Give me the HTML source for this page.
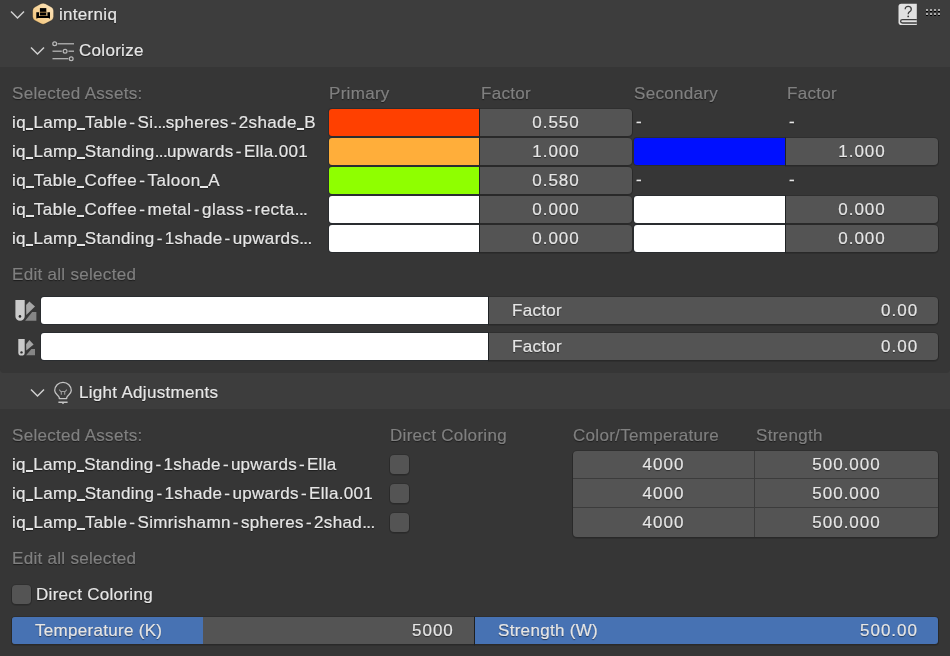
<!DOCTYPE html><html><head><meta charset="utf-8"><style>
html,body{margin:0;padding:0;}
body{width:950px;height:656px;overflow:hidden;background:#3d3d3d;position:relative;font-family:"Liberation Sans",sans-serif;font-size:17px;color:#e6e6e6;}
.a{position:absolute;}
.t{position:absolute;line-height:20px;white-space:pre;will-change:transform;letter-spacing:0.3px;-webkit-text-stroke:0.2px currentColor;text-shadow:0 1px 1px rgba(0,0,0,0.5);}
.c{text-align:center;}
.n{letter-spacing:1px;}
.dim{color:#808080;}
.h{padding:0 2.1px;}
.el{letter-spacing:-0.6px;}
.u{display:inline-block;width:7.5px;height:1.5px;margin:0 0.2px 0 -0.2px;background:currentColor;position:relative;top:1.5px;box-shadow:0 1px 1px rgba(0,0,0,0.4);}
.pb{position:absolute;left:0;width:950px;background:#363636;}
.num{position:absolute;background:#545454;box-shadow:0 0 0 1px rgba(0,0,0,0.12),0 1px 0 1px rgba(0,0,0,0.12);}
.sw{position:absolute;box-shadow:0 0 0 1px rgba(30,36,42,0.5);}
.cb{position:absolute;width:19px;height:19px;background:#545454;border-radius:4px;box-shadow:0 0 0 1px rgba(0,0,0,0.1),0 1px 0 1px rgba(0,0,0,0.12);}
</style></head><body>
<div class="pb" style="top:67px;height:306px;border-radius:0 0 4px 4px;"></div>
<div class="pb" style="top:409px;height:247px;"></div>
<svg class="a" style="left:10px;top:10px" width="16" height="10" viewBox="0 0 16 10"><path d="M1 1.5 L7.5 8 L14 1.5" fill="none" stroke="#d0d0d0" stroke-width="1.5"/></svg>
<svg class="a" style="left:0;top:0" width="60" height="30" viewBox="0 0 60 30">
<defs><linearGradient id="hg" x1="0" y1="1" x2="1" y2="0"><stop offset="0" stop-color="#f3c274"/><stop offset="0.6" stop-color="#f9d9a4"/><stop offset="1" stop-color="#fde6c0"/></linearGradient></defs>
<path d="M40.79 3.78 Q43.10 2.50 45.41 3.78 L51.29 7.02 Q53.60 8.30 53.60 10.68 L53.60 16.72 Q53.60 19.10 51.29 20.38 L45.41 23.62 Q43.10 24.90 40.79 23.62 L34.91 20.38 Q32.60 19.10 32.60 16.72 L32.60 10.68 Q32.60 8.30 34.91 7.02 Z" fill="url(#hg)" stroke="rgba(0,0,0,0.35)" stroke-width="0.8"/>
<rect x="39.9" y="8.1" width="6.4" height="7.8" fill="#000"/>
<rect x="39.9" y="11.7" width="6.4" height="1.1" fill="#8a6a3c"/>
<rect x="39.9" y="15" width="6.4" height="0.9" fill="#8a6a3c"/>
<path d="M36.3 12.2 H39 V15.9 H47.4 V12.2 H50 V18.6 H49.2 L48.6 18 H37.7 L37.1 18.6 H36.3 Z" fill="#000"/>
</svg>
<div class="t " style="left:59px;top:5px;">interniq</div>
<svg class="a" style="left:894px;top:0" width="28" height="28" viewBox="894 0 28 28">
<path d="M901.3 3.8 H916.8 V25 H901.3 Q898.5 25 898.5 22.2 V6.6 Q898.5 3.8 901.3 3.8 Z" fill="#e1e1e1"/>
<path d="M916.8 19.7 H902.5 Q900.6 19.7 900.6 21.35 Q900.6 23 902.5 23 H916.8" fill="none" stroke="#3d3d3d" stroke-width="1.3"/>
<path d="M905.2 9.3 Q905.2 6.3 908.2 6.3 Q911.3 6.3 911.3 9.2 Q911.3 10.9 909.4 11.9 Q908.2 12.6 908.2 14.3" fill="none" stroke="#3d3d3d" stroke-width="1.3"/>
<circle cx="908.2" cy="16.4" r="0.9" fill="#3d3d3d"/>
</svg>
<svg class="a" style="left:0;top:0" width="950" height="30" viewBox="0 0 950 30"><rect x="926" y="9" width="2" height="2" fill="#a9a9a9"/><rect x="926" y="11" width="2" height="1" fill="#000"/><rect x="926" y="13" width="2" height="2" fill="#a9a9a9"/><rect x="926" y="15" width="2" height="1" fill="#000"/><rect x="930" y="9" width="2" height="2" fill="#a9a9a9"/><rect x="930" y="11" width="2" height="1" fill="#000"/><rect x="930" y="13" width="2" height="2" fill="#a9a9a9"/><rect x="930" y="15" width="2" height="1" fill="#000"/><rect x="934" y="9" width="2" height="2" fill="#a9a9a9"/><rect x="934" y="11" width="2" height="1" fill="#000"/><rect x="934" y="13" width="2" height="2" fill="#a9a9a9"/><rect x="934" y="15" width="2" height="1" fill="#000"/><rect x="938" y="9" width="2" height="2" fill="#a9a9a9"/><rect x="938" y="11" width="2" height="1" fill="#000"/><rect x="938" y="13" width="2" height="2" fill="#a9a9a9"/><rect x="938" y="15" width="2" height="1" fill="#000"/></svg>
<svg class="a" style="left:30px;top:46px" width="16" height="10" viewBox="0 0 16 10"><path d="M1 1.5 L7.5 8 L14 1.5" fill="none" stroke="#d0d0d0" stroke-width="1.5"/></svg>
<svg class="a" style="left:50px;top:38px" width="28" height="26" viewBox="50 38 28 26">
<g fill="none" stroke="#b9b9b9" stroke-width="1.25">
<circle cx="54.7" cy="43.8" r="1.9"/><path d="M57.6 43.8 H74"/>
<path d="M52.5 51.2 H61.8"/><circle cx="65.1" cy="51.2" r="1.9"/><path d="M68.4 51.2 H74"/>
<path d="M52.5 58.7 H68.3"/><circle cx="71.2" cy="58.7" r="1.9"/>
</g></svg>
<div class="t " style="left:79px;top:41px;">Colorize</div>
<div class="t dim" style="left:12px;top:84px;">Selected Assets:</div>
<div class="t dim" style="left:329px;top:84px;">Primary</div>
<div class="t dim" style="left:481px;top:84px;">Factor</div>
<div class="t dim" style="left:634px;top:84px;">Secondary</div>
<div class="t dim" style="left:787px;top:84px;">Factor</div>
<div class="t " style="left:12px;top:113px;letter-spacing:0.35px;">iq<span class="u"></span>Lamp<span class="u"></span>Table<span class="h">-</span>Si<span class="el">...</span>spheres<span class="h">-</span>2shade<span class="u"></span>B</div>
<div class="sw" style="left:329px;top:109px;width:150px;height:27px;background:#ff4000;border-radius:3px 0 0 3px;"></div>
<div class="num" style="left:480px;top:109px;width:152px;height:27px;border-radius:0 4px 4px 0;"></div>
<div class="t c n" style="left:480px;width:152px;top:113px;">0.550</div>
<div class="t " style="left:636px;top:112px;">-</div>
<div class="t " style="left:789px;top:112px;">-</div>
<div class="t " style="left:12px;top:142px;letter-spacing:0.34px;">iq<span class="u"></span>Lamp<span class="u"></span>Standing<span class="el">...</span>upwards<span class="h">-</span>Ella.001</div>
<div class="sw" style="left:329px;top:138px;width:150px;height:27px;background:#ffae3a;border-radius:3px 0 0 3px;"></div>
<div class="num" style="left:480px;top:138px;width:152px;height:27px;border-radius:0 4px 4px 0;"></div>
<div class="t c n" style="left:480px;width:152px;top:142px;">1.000</div>
<div class="sw" style="left:634px;top:138px;width:151px;height:27px;background:#0010ff;border-radius:3px 0 0 3px;"></div>
<div class="num" style="left:786px;top:138px;width:152px;height:27px;border-radius:0 4px 4px 0;"></div>
<div class="t c n" style="left:786px;width:152px;top:142px;">1.000</div>
<div class="t " style="left:12px;top:171px;letter-spacing:0.5px;">iq<span class="u"></span>Table<span class="u"></span>Coffee<span class="h">-</span>Taloon<span class="u"></span>A</div>
<div class="sw" style="left:329px;top:167px;width:150px;height:27px;background:#8fff00;border-radius:3px 0 0 3px;"></div>
<div class="num" style="left:480px;top:167px;width:152px;height:27px;border-radius:0 4px 4px 0;"></div>
<div class="t c n" style="left:480px;width:152px;top:171px;">0.580</div>
<div class="t " style="left:636px;top:170px;">-</div>
<div class="t " style="left:789px;top:170px;">-</div>
<div class="t " style="left:12px;top:200px;letter-spacing:0.5px;">iq<span class="u"></span>Table<span class="u"></span>Coffee<span class="h">-</span>metal<span class="h">-</span>glass<span class="h">-</span>recta<span class="el">...</span></div>
<div class="sw" style="left:329px;top:196px;width:150px;height:27px;background:#ffffff;border-radius:3px 0 0 3px;"></div>
<div class="num" style="left:480px;top:196px;width:152px;height:27px;border-radius:0 4px 4px 0;"></div>
<div class="t c n" style="left:480px;width:152px;top:200px;">0.000</div>
<div class="sw" style="left:634px;top:196px;width:151px;height:27px;background:#ffffff;border-radius:3px 0 0 3px;"></div>
<div class="num" style="left:786px;top:196px;width:152px;height:27px;border-radius:0 4px 4px 0;"></div>
<div class="t c n" style="left:786px;width:152px;top:200px;">0.000</div>
<div class="t " style="left:12px;top:229px;letter-spacing:0.33px;">iq<span class="u"></span>Lamp<span class="u"></span>Standing<span class="h">-</span>1shade<span class="h">-</span>upwards<span class="el">...</span></div>
<div class="sw" style="left:329px;top:225px;width:150px;height:27px;background:#ffffff;border-radius:3px 0 0 3px;"></div>
<div class="num" style="left:480px;top:225px;width:152px;height:27px;border-radius:0 4px 4px 0;"></div>
<div class="t c n" style="left:480px;width:152px;top:229px;">0.000</div>
<div class="sw" style="left:634px;top:225px;width:151px;height:27px;background:#ffffff;border-radius:3px 0 0 3px;"></div>
<div class="num" style="left:786px;top:225px;width:152px;height:27px;border-radius:0 4px 4px 0;"></div>
<div class="t c n" style="left:786px;width:152px;top:229px;">0.000</div>
<div class="t dim" style="left:12px;top:265px;">Edit all selected</div>
<div class="sw" style="left:41px;top:297px;width:447px;height:27px;background:#ffffff;border-radius:3px 0 0 3px;"></div>
<div class="num" style="left:489px;top:297px;width:449px;height:27px;border-radius:0 4px 4px 0;"></div>
<svg class="a" style="left:12px;top:298px" width="26" height="26" viewBox="12 298 26 26">
<path d="M15.4 300 H24.7 V316.2 A4.65 4.65 0 0 1 15.4 316.2 Z" fill="#cbcbcb"/>
<circle cx="19.95" cy="316.4" r="1.3" fill="#2b2b2b"/>
<path d="M26.1 304.9 L29.4 301.4 L35 306.5 L26.3 315 Z" fill="#a6a6a6"/>
<path d="M25.1 320.8 L32.2 311.9 H36.4 V320.8 Z" fill="#868686"/>
</svg>
<div class="t " style="left:512px;top:301px;">Factor</div>
<div class="t r n" style="right:32px;top:301px;">0.00</div>
<div class="sw" style="left:41px;top:333px;width:447px;height:27px;background:#ffffff;border-radius:3px 0 0 3px;"></div>
<div class="num" style="left:489px;top:333px;width:449px;height:27px;border-radius:0 4px 4px 0;"></div>
<svg class="a" style="left:12px;top:334px" width="26" height="26" viewBox="12 334 26 26">
<path d="M18.3 339 H24.7 V352.4 A3.2 3.2 0 0 1 18.3 352.4 Z" fill="#cbcbcb"/>
<circle cx="21.5" cy="352.4" r="1.2" fill="#2b2b2b"/>
<path d="M26.1 344.3 L29.4 340.1 L33.6 344.5 L26.3 350.6 Z" fill="#a6a6a6"/>
<path d="M26.1 355.2 L31.4 349.1 H35 V355.2 Z" fill="#868686"/>
</svg>
<div class="t " style="left:512px;top:337px;">Factor</div>
<div class="t r n" style="right:32px;top:337px;">0.00</div>
<svg class="a" style="left:30px;top:388px" width="16" height="10" viewBox="0 0 16 10"><path d="M1 1.5 L7.5 8 L14 1.5" fill="none" stroke="#d0d0d0" stroke-width="1.5"/></svg>
<svg class="a" style="left:50px;top:378px" width="26" height="30" viewBox="50 378 26 30">
<g fill="none" stroke="#c4c4c4" stroke-width="1.3" stroke-linejoin="round">
<path d="M59.3 398.6 V397.6 Q58.9 396.3 57.3 394.9 Q54.7 392.6 54.7 390.6 A8.3 8.3 0 1 1 71.3 390.6 Q71.3 392.6 68.7 394.9 Q67.1 396.3 66.7 397.6 V398.6 Z"/>
</g>
<path d="M58.4 401.6 H67.6 V403 H64.2 L63 404.2 L61.8 403 H58.4 Z" fill="#c4c4c4"/>
<g fill="none" stroke="#9c9c9c" stroke-width="1.1">
<path d="M59.2 389.6 L60.8 391.5 H65.2 L66.8 389.6"/><path d="M61.3 391.5 V394.8 M64.7 391.5 V394.8"/>
</g></svg>
<div class="t " style="left:79px;top:383px;">Light Adjustments</div>
<div class="t dim" style="left:12px;top:426px;">Selected Assets:</div>
<div class="t dim" style="left:390px;top:426px;">Direct Coloring</div>
<div class="t dim" style="left:573px;top:426px;">Color/Temperature</div>
<div class="t dim" style="left:756px;top:426px;">Strength</div>
<div class="num" style="left:573px;top:451px;width:365px;height:86px;border-radius:4px;"></div>
<div class="a" style="left:754px;top:451px;width:1px;height:86px;background:#3c3c3c;"></div>
<div class="a" style="left:573px;top:478px;width:365px;height:1px;background:#3c3c3c;"></div>
<div class="a" style="left:573px;top:507px;width:365px;height:1px;background:#3c3c3c;"></div>
<div class="t " style="left:12px;top:455px;letter-spacing:0.25px;">iq<span class="u"></span>Lamp<span class="u"></span>Standing<span class="h">-</span>1shade<span class="h">-</span>upwards<span class="h">-</span>Ella</div>
<div class="cb" style="left:390px;top:455px;"></div>
<div class="t c n" style="left:573px;width:181px;top:455px;">4000</div>
<div class="t c n" style="left:755px;width:183px;top:455px;">500.000</div>
<div class="t " style="left:12px;top:484px;letter-spacing:0.32px;">iq<span class="u"></span>Lamp<span class="u"></span>Standing<span class="h">-</span>1shade<span class="h">-</span>upwards<span class="h">-</span>Ella.001</div>
<div class="cb" style="left:390px;top:484px;"></div>
<div class="t c n" style="left:573px;width:181px;top:484px;">4000</div>
<div class="t c n" style="left:755px;width:183px;top:484px;">500.000</div>
<div class="t " style="left:12px;top:513px;letter-spacing:0.35px;">iq<span class="u"></span>Lamp<span class="u"></span>Table<span class="h">-</span>Simrishamn<span class="h">-</span>spheres<span class="h">-</span>2shad<span class="el">...</span></div>
<div class="cb" style="left:390px;top:513px;"></div>
<div class="t c n" style="left:573px;width:181px;top:513px;">4000</div>
<div class="t c n" style="left:755px;width:183px;top:513px;">500.000</div>
<div class="t dim" style="left:12px;top:549px;">Edit all selected</div>
<div class="cb" style="left:12px;top:585px;"></div>
<div class="t " style="left:36px;top:585px;">Direct Coloring</div>
<div class="num" style="left:12px;top:617px;width:462px;height:27px;border-radius:3px 0 0 3px;"></div>
<div class="a" style="left:12px;top:617px;width:191px;height:27px;background:#4772b3;border-radius:3px 0 0 3px;"></div>
<div class="num" style="left:475px;top:617px;width:463px;height:27px;background:#4772b3;border-radius:0 3px 3px 0;"></div>
<div class="t " style="left:35px;top:621px;">Temperature (K)</div>
<div class="t r n" style="right:496px;top:621px;">5000</div>
<div class="t " style="left:498px;top:621px;">Strength (W)</div>
<div class="t r n" style="right:32px;top:621px;">500.00</div>
</body></html>
